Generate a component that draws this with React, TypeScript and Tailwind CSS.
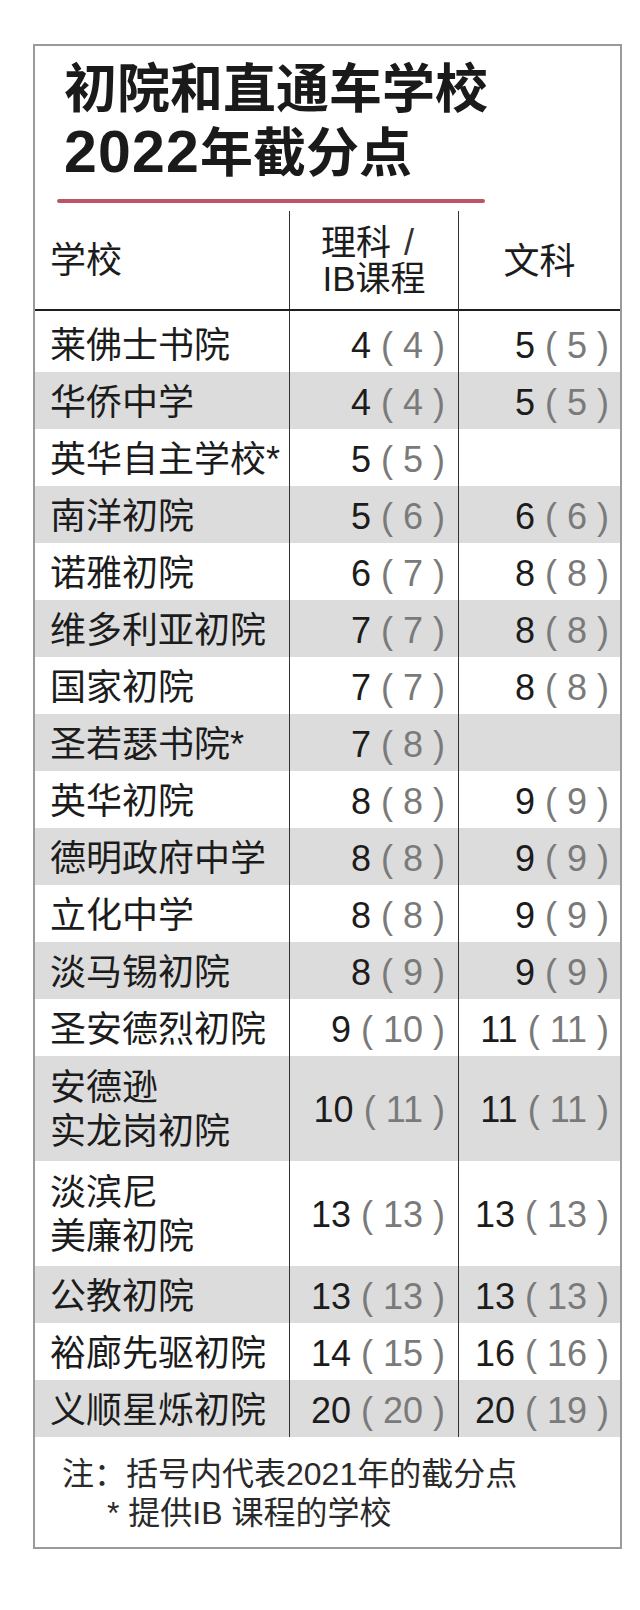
import React from "react";

type Row = {
  name: string | string[];
  a: string;
  ap: string;
  b: string | null;
  bp: string | null;
  h: string;
};

const rows: Row[] = [
  { name: "莱佛士书院", a: "4", ap: "4", b: "5", bp: "5", h: "h-[61px] pt-[8px]" },
  { name: "华侨中学", a: "4", ap: "4", b: "5", bp: "5", h: "h-[57px] pt-[4px]" },
  { name: "英华自主学校*", a: "5", ap: "5", b: null, bp: null, h: "h-[57px] pt-[4px]" },
  { name: "南洋初院", a: "5", ap: "6", b: "6", bp: "6", h: "h-[57px] pt-[4px]" },
  { name: "诺雅初院", a: "6", ap: "7", b: "8", bp: "8", h: "h-[57px] pt-[4px]" },
  { name: "维多利亚初院", a: "7", ap: "7", b: "8", bp: "8", h: "h-[57px] pt-[4px]" },
  { name: "国家初院", a: "7", ap: "7", b: "8", bp: "8", h: "h-[57px] pt-[4px]" },
  { name: "圣若瑟书院*", a: "7", ap: "8", b: null, bp: null, h: "h-[57px] pt-[4px]" },
  { name: "英华初院", a: "8", ap: "8", b: "9", bp: "9", h: "h-[57px] pt-[4px]" },
  { name: "德明政府中学", a: "8", ap: "8", b: "9", bp: "9", h: "h-[57px] pt-[4px]" },
  { name: "立化中学", a: "8", ap: "8", b: "9", bp: "9", h: "h-[57px] pt-[4px]" },
  { name: "淡马锡初院", a: "8", ap: "9", b: "9", bp: "9", h: "h-[57px] pt-[4px]" },
  { name: "圣安德烈初院", a: "9", ap: "10", b: "11", bp: "11", h: "h-[57px] pt-[4px]" },
  { name: ["安德逊", "实龙岗初院"], a: "10", ap: "11", b: "11", bp: "11", h: "h-[105px] pt-[2px]" },
  { name: ["淡滨尼", "美廉初院"], a: "13", ap: "13", b: "13", bp: "13", h: "h-[105px] pt-[2px]" },
  { name: "公教初院", a: "13", ap: "13", b: "13", bp: "13", h: "h-[57px] pt-[4px]" },
  { name: "裕廊先驱初院", a: "14", ap: "15", b: "16", bp: "16", h: "h-[57px] pt-[4px]" },
  { name: "义顺星烁初院", a: "20", ap: "20", b: "20", bp: "19", h: "h-[57px] pt-[4px]" },
];

function Score({ v, p }: { v: string | null; p: string | null }) {
  if (v === null) return null;
  return (
    <span className="whitespace-pre">
      <span className="text-[#1c1c1c]">{v}</span>
      <span className="text-[#7a7a7a]">{" ( " + p + " )"}</span>
    </span>
  );
}

export default function App() {
  const font = { fontFamily: '"Liberation Sans", "Noto Sans CJK SC", sans-serif' };
  return (
    <div className="w-[640px] min-h-[1610px] bg-white pt-[44px]" style={font}>
      <div className="ml-[33px] w-[589px] border-2 border-[#9a9a9a] bg-white">
        {/* Title */}
        <div className="pl-[29px] pt-[13px] text-[53px] font-bold leading-[62px] text-[#1a1a1a]">
          <div>初院和直通车学校</div>
          <div>
            <span className="text-[59px] tracking-[0.02em]" style={{ fontFamily: '"Liberation Sans", sans-serif' }}>
              2022
            </span>
            年截分点
          </div>
        </div>
        <div className="ml-[22px] mt-[14px] h-[4px] w-[428px] rounded-full bg-[#bd5566]" />

        {/* Header */}
        <div className="mt-[8px] flex h-[100px] border-b-2 border-[#1e1e1e] text-[36px] text-[#1c1c1c]">
          <div className="flex w-[254px] items-center pl-[15px] pt-[2px]">学校</div>
          <div className="flex w-[169px] flex-col items-center justify-center border-l-[1.5px] border-[#333] pt-[2px] text-[35px] leading-[36px]">
            <div className="flex items-center">
              <span>理科</span>
              <span className="inline-block w-[36px] text-center text-[36px] leading-[36px] text-[#333]">/</span>
            </div>
            <div>IB课程</div>
          </div>
          <div className="flex flex-1 items-center justify-center border-l-[1.5px] border-[#333] pt-[4px]">文科</div>
        </div>

        {/* Rows */}
        <div className="text-[36px] text-[#1c1c1c]">
          {rows.map((r, i) => (
            <div key={i} className={`flex ${i % 2 === 1 ? "bg-[#dcdcdc]" : "bg-white"}`}>
              <div className={`flex w-[254px] items-center pl-[15px] ${r.h}`}>
                {Array.isArray(r.name) ? (
                  <div className="leading-[44px]">
                    <div>{r.name[0]}</div>
                    <div>{r.name[1]}</div>
                  </div>
                ) : (
                  <span className="whitespace-nowrap">{r.name}</span>
                )}
              </div>
              <div className={`flex w-[169px] items-center justify-end border-l-[1.5px] border-[#333] pr-[13px] ${r.h}`}>
                <Score v={r.a} p={r.ap} />
              </div>
              <div className={`flex flex-1 items-center justify-end border-l-[1.5px] border-[#333] pr-[11px] ${r.h}`}>
                <Score v={r.b} p={r.bp} />
              </div>
            </div>
          ))}
        </div>

        {/* Note */}
        <div className="pb-[14px] pl-[27px] pt-[18px] text-[32px] leading-[39px] text-[#2a2a2a]">
          <div>注：括号内代表2021年的截分点</div>
          <div className="whitespace-pre pl-[45px]">* 提供IB 课程的学校</div>
        </div>
      </div>
    </div>
  );
}
